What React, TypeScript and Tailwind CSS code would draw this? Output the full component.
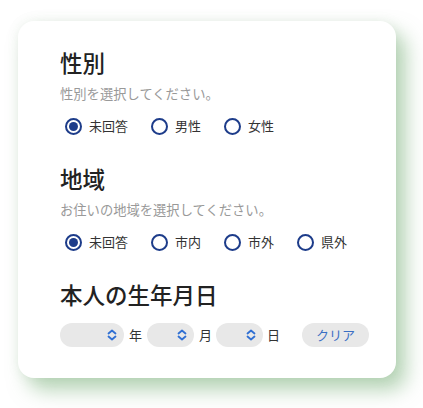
import { useState } from "react";

type Option = { value: string; label: string };

const genderOptions: Option[] = [
  { value: "none", label: "未回答" },
  { value: "male", label: "男性" },
  { value: "female", label: "女性" },
];

const areaOptions: Option[] = [
  { value: "none", label: "未回答" },
  { value: "city", label: "市内" },
  { value: "outside", label: "市外" },
  { value: "pref", label: "県外" },
];

function RadioGroup({
  options,
  value,
  onChange,
}: {
  options: Option[];
  value: string;
  onChange: (v: string) => void;
}) {
  return (
    <div className="flex items-center gap-[23px] pl-[5px] h-[24px] mt-[10px]">
      {options.map((o) => (
        <label
          key={o.value}
          className="flex items-center gap-[7px] cursor-pointer"
          onClick={() => onChange(o.value)}
        >
          <span className="w-[17px] h-[17px] rounded-full border-2 border-[#1d3c8a] flex items-center justify-center">
            {value === o.value && (
              <span className="w-[9px] h-[9px] rounded-full bg-[#1d3c8a]" />
            )}
          </span>
          <span className="text-[13px] leading-[20px] text-[#333]">{o.label}</span>
        </label>
      ))}
    </div>
  );
}

function Chevrons() {
  return (
    <svg width="10" height="12" viewBox="0 0 10 12" fill="none">
      <path
        d="M1.5 4.5 L5 1.5 L8.5 4.5 M1.5 7.5 L5 10.5 L8.5 7.5"
        stroke="#2f6fd3"
        strokeWidth="1.8"
        strokeLinecap="round"
        strokeLinejoin="round"
      />
    </svg>
  );
}

function PillSelect({ width }: { width: string }) {
  return (
    <div
      className={`${width} h-[24px] rounded-full bg-[#e8e8e8] flex items-center justify-end pr-[7px]`}
    >
      <Chevrons />
    </div>
  );
}

export default function App() {
  const [gender, setGender] = useState("none");
  const [area, setArea] = useState("none");

  return (
    <div
      className="w-[423px] h-[408px] bg-white pt-[21px] pl-[18px]"
      style={{ fontFamily: '"Noto Sans CJK JP", "Noto Sans", sans-serif' }}
    >
      <div className="w-[378px] h-[357px] rounded-[16px] bg-white pl-[42px] pt-[27px] shadow-[10px_12px_20px_rgba(110,170,110,0.5),0_0_12px_rgba(120,160,120,0.12)]">
        {/* 性別 */}
        <section>
          <h2 className="text-[22.5px] leading-[28px] font-medium text-[#222]">性別</h2>
          <p className="mt-[8px] text-[13.3px] leading-[20px] text-[#999]">
            性別を選択してください。
          </p>
          <RadioGroup options={genderOptions} value={gender} onChange={setGender} />
        </section>

        {/* 地域 */}
        <section className="mt-[26px]">
          <h2 className="text-[22.5px] leading-[28px] font-medium text-[#222]">地域</h2>
          <p className="mt-[8px] text-[13.3px] leading-[20px] text-[#999]">
            お住いの地域を選択してください。
          </p>
          <RadioGroup options={areaOptions} value={area} onChange={setArea} />
        </section>

        {/* 生年月日 */}
        <section className="mt-[26px]">
          <h2 className="text-[22.5px] leading-[28px] font-medium text-[#222]">本人の生年月日</h2>
          <div className="mt-[15px] flex items-center text-[13px] text-[#333]">
            <PillSelect width="w-[64px]" />
            <span className="ml-[5px] mr-[5px]">年</span>
            <PillSelect width="w-[47px]" />
            <span className="ml-[5px] mr-[4px]">月</span>
            <PillSelect width="w-[47px]" />
            <span className="ml-[4px]">日</span>
            <button className="ml-[22px] w-[67px] h-[24px] rounded-full bg-[#e8e8e8] text-[13px] text-[#3b6fc4]">
              クリア
            </button>
          </div>
        </section>
      </div>
    </div>
  );
}
